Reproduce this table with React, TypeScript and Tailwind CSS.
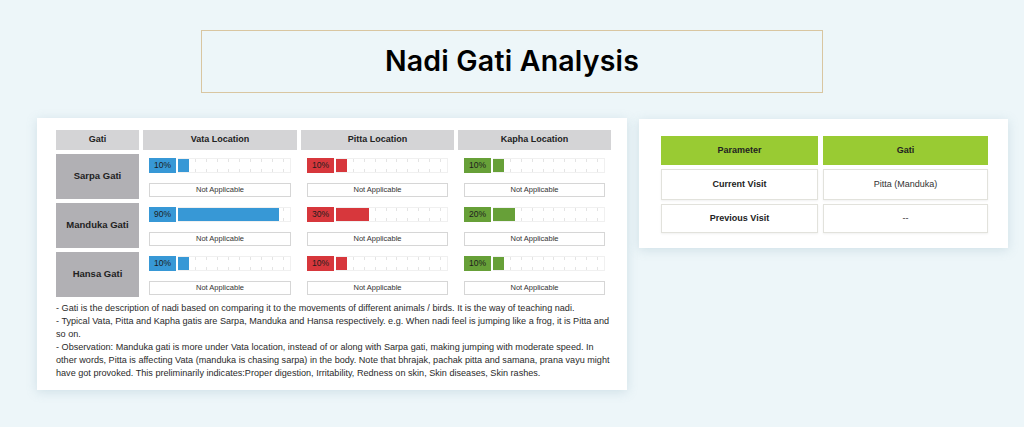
import React from 'react'

type Level = { pct: number }

const colors = {
  vata: 'bg-[#3798d6]',
  pitta: 'bg-[#d7373c]',
  kapha: 'bg-[#67a038]',
}

const rows: { name: string; vata: number; pitta: number; kapha: number }[] = [
  { name: 'Sarpa Gati', vata: 10, pitta: 10, kapha: 10 },
  { name: 'Manduka Gati', vata: 90, pitta: 30, kapha: 20 },
  { name: 'Hansa Gati', vata: 10, pitta: 10, kapha: 10 },
]

function Ticks() {
  return (
    <div className="absolute inset-0 flex justify-between px-[6px]">
      {Array.from({ length: 10 }).map((_, i) => (
        <div key={i} className="flex h-full w-px flex-col justify-between">
          <span className="h-[3px] w-px bg-[#e4e4e4]" />
          <span className="h-[3px] w-px bg-[#e4e4e4]" />
        </div>
      ))}
    </div>
  )
}

function Bar({ pct, color }: Level & { color: string }) {
  return (
    <div className="flex h-[15px] gap-[2px]">
      <div className={`flex w-[27px] items-center justify-center text-[8.5px] text-[#1d1d1d] ${color}`}>
        {pct}%
      </div>
      <div className="relative flex-1 border-y border-r border-[#f0f0f0] bg-white">
        <Ticks />
        <div className={`relative h-full ${color}`} style={{ width: `${pct}%` }} />
      </div>
    </div>
  )
}

function Cell({ pct, color }: Level & { color: string }) {
  return (
    <div className="bg-white px-[6px] pt-[4px]">
      <Bar pct={pct} color={color} />
      <div className="mt-[10px] flex h-[14px] items-center justify-center border border-[#d6d6d6] bg-white text-[7.5px] text-[#333]">
        Not Applicable
      </div>
    </div>
  )
}

export default function App() {
  return (
    <div className="h-[427px] w-full overflow-hidden bg-[#edf6f9] font-['Liberation_Sans',Arial,sans-serif] text-[#222]">
      <div className="mx-auto mt-[30px] flex h-[63px] w-[622px] items-center justify-center border border-[#d9c6a1]">
        <h1 className="font-['Inter',sans-serif] text-[28.5px] font-semibold tracking-[0.2px] text-black">
          Nadi Gati Analysis
        </h1>
      </div>

      <div className="mt-[25px] flex items-start gap-[12px] pl-[37px]">
        <div className="h-[272px] w-[590px] bg-white pl-[19px] pr-[15px] pt-[12px] shadow-[0_2px_10px_rgba(120,160,180,0.25)]">
          <div className="grid grid-cols-[83px_154px_153px_153px] grid-rows-[20px_45px_45px_45px] gap-x-[4px] gap-y-[4px]">
            {['Gati', 'Vata Location', 'Pitta Location', 'Kapha Location'].map((h) => (
              <div key={h} className="flex items-center justify-center bg-[#d4d4d6] text-[9px] font-bold">
                {h}
              </div>
            ))}
            {rows.map((r) => (
              <React.Fragment key={r.name}>
                <div className="flex items-center justify-center bg-[#b1b0b4] text-[9.5px] font-bold">
                  {r.name}
                </div>
                <Cell pct={r.vata} color={colors.vata} />
                <Cell pct={r.pitta} color={colors.pitta} />
                <Cell pct={r.kapha} color={colors.kapha} />
              </React.Fragment>
            ))}
          </div>

          <div className="mt-[5px] w-[558px] text-[9.1px] leading-[13px] text-[#2a2a2a]">
            <p>- Gati is the description of nadi based on comparing it to the movements of different animals / birds. It is the way of teaching nadi.</p>
            <p>- Typical Vata, Pitta and Kapha gatis are Sarpa, Manduka and Hansa respectively. e.g. When nadi feel is jumping like a frog, it is Pitta and so on.</p>
            <p>
              - Observation: Manduka gati is more under Vata location, instead of or along with Sarpa gati, making jumping with moderate speed. In other words, Pitta is affecting Vata (manduka is chasing sarpa) in the body. Note that bhrajak, pachak pitta and samana, prana vayu might have got provoked. This preliminarily indicates:Proper digestion, Irritability, Redness on skin, Skin diseases, Skin rashes.
            </p>
          </div>
        </div>

        <div className="mt-[1px] h-[129px] w-[369px] bg-white pl-[22px] pr-[20px] pt-[17px] shadow-[0_2px_10px_rgba(120,160,180,0.25)]">
          <div className="grid grid-cols-[157px_165px] grid-rows-[29px_31px_29px] gap-x-[5px] gap-y-[4px] text-[9px]">
            <div className="flex items-center justify-center bg-[#99cb33] font-bold">Parameter</div>
            <div className="flex items-center justify-center bg-[#99cb33] font-bold">Gati</div>
            <div className="flex items-center justify-center border border-[#e2e2dc] font-bold shadow-[0_1px_2px_rgba(0,0,0,0.06)]">Current Visit</div>
            <div className="flex items-center justify-center border border-[#e2e2dc] text-[#333] shadow-[0_1px_2px_rgba(0,0,0,0.06)]">Pitta (Manduka)</div>
            <div className="flex items-center justify-center border border-[#e2e2dc] font-bold shadow-[0_1px_2px_rgba(0,0,0,0.06)]">Previous Visit</div>
            <div className="flex items-center justify-center border border-[#e2e2dc] text-[#333] shadow-[0_1px_2px_rgba(0,0,0,0.06)]">--</div>
          </div>
        </div>
      </div>
    </div>
  )
}
